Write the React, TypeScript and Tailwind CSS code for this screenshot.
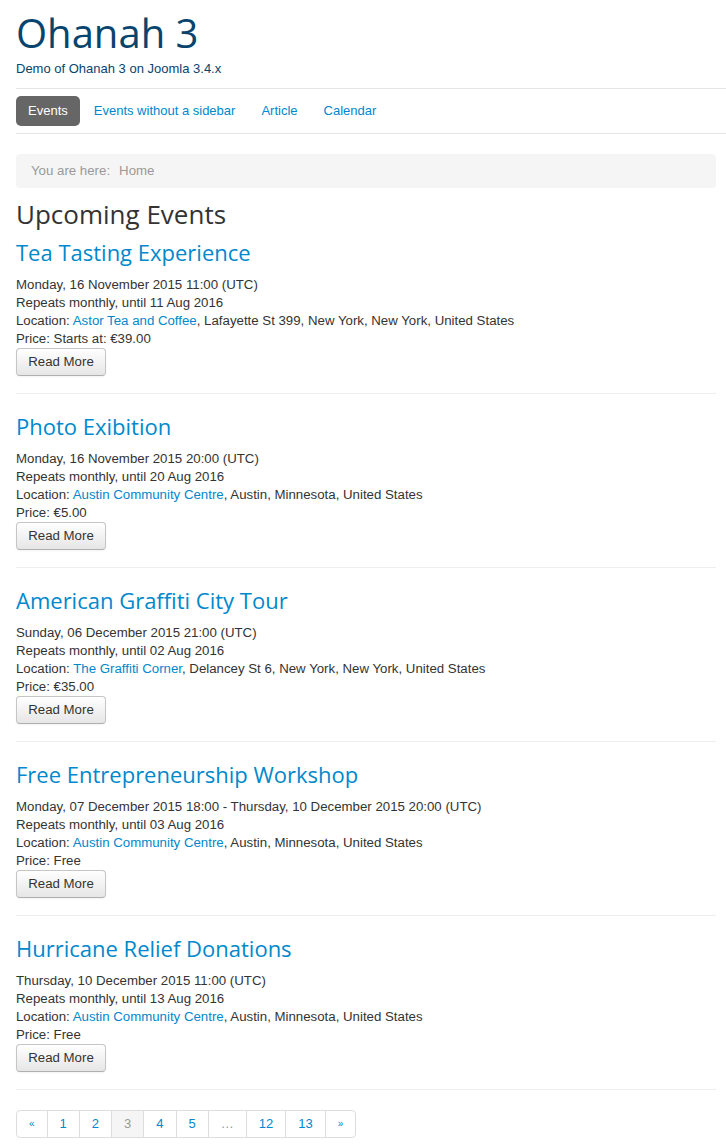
import React from "react";

type Ev = {
  title: string;
  date: string;
  repeat: string;
  loc: string;
  rest: string;
  price: string;
};

const events: Ev[] = [
  {
    title: "Tea Tasting Experience",
    date: "Monday, 16 November 2015 11:00 (UTC)",
    repeat: "Repeats monthly, until 11 Aug 2016",
    loc: "Astor Tea and Coffee",
    rest: ", Lafayette St 399, New York, New York, United States",
    price: "Price: Starts at: €39.00",
  },
  {
    title: "Photo Exibition",
    date: "Monday, 16 November 2015 20:00 (UTC)",
    repeat: "Repeats monthly, until 20 Aug 2016",
    loc: "Austin Community Centre",
    rest: ", Austin, Minnesota, United States",
    price: "Price: €5.00",
  },
  {
    title: "American Graffiti City Tour",
    date: "Sunday, 06 December 2015 21:00 (UTC)",
    repeat: "Repeats monthly, until 02 Aug 2016",
    loc: "The Graffiti Corner",
    rest: ", Delancey St 6, New York, New York, United States",
    price: "Price: €35.00",
  },
  {
    title: "Free Entrepreneurship Workshop",
    date: "Monday, 07 December 2015 18:00 - Thursday, 10 December 2015 20:00 (UTC)",
    repeat: "Repeats monthly, until 03 Aug 2016",
    loc: "Austin Community Centre",
    rest: ", Austin, Minnesota, United States",
    price: "Price: Free",
  },
  {
    title: "Hurricane Relief Donations",
    date: "Thursday, 10 December 2015 11:00 (UTC)",
    repeat: "Repeats monthly, until 13 Aug 2016",
    loc: "Austin Community Centre",
    rest: ", Austin, Minnesota, United States",
    price: "Price: Free",
  },
];

const pages = [
  { t: "«", small: true },
  { t: "1" },
  { t: "2" },
  { t: "3", active: true },
  { t: "4" },
  { t: "5" },
  { t: "…", muted: true },
  { t: "12" },
  { t: "13" },
  { t: "»", small: true },
];

export default function App() {
  return (
    <div
      className="min-h-[1146px] bg-white text-[13.25px] leading-[18px] text-[#333]"
      style={{ fontFamily: '"Liberation Sans", Arial, sans-serif' }}
    >
      <div className="pl-[16px]">
        <div className="pt-[11px]">
          <div
            className="text-[40px] leading-[44px] text-[#08446e]"
            style={{ fontFamily: '"Open Sans", sans-serif' }}
          >
            Ohanah 3
          </div>
          <div className="mt-[5px] text-[13px] text-[#08446e]">Demo of Ohanah 3 on Joomla 3.4.x</div>
        </div>
        <div className="mt-[10px] h-px bg-[#e5e5e5]" />
        <nav className="mt-[7px] flex text-[13px]">
          <a className="rounded-[5px] bg-[#666] px-[12px] py-[6px] text-white">Events</a>
          <a className="ml-[2px] px-[12px] py-[6px] text-[#0088cc]">Events without a sidebar</a>
          <a className="ml-[2px] px-[12px] py-[6px] text-[#0088cc]">Article</a>
          <a className="ml-[2px] px-[12px] py-[6px] text-[#0088cc]">Calendar</a>
        </nav>
        <div className="mt-[7px] h-px bg-[#e5e5e5]" />
      </div>

      <div className="pl-[16px] pr-[10px]">
        <div className="mt-[20px] flex rounded-[4px] bg-[#f5f5f5] px-[15px] py-[8px] text-[#999]">
          <span>You are here:</span>
          <span className="ml-[9px]">Home</span>
        </div>

        <h2
          className="mt-[11px] text-[26px] leading-[30px] text-[#333]"
          style={{ fontFamily: '"Open Sans", sans-serif' }}
        >
          Upcoming Events
        </h2>

        <div className="mt-[10px]">
          {events.map((e, i) => (
            <div key={i}>
              {i > 0 && <div className="mb-[19px] mt-[17px] h-px bg-[#eee]" />}
              <div
                className="text-[22px] leading-[26px] text-[#0088cc]"
                style={{ fontFamily: '"Open Sans", sans-serif' }}
              >
                {e.title}
              </div>
              <div className="mt-[11px]">
                <div>{e.date}</div>
                <div>{e.repeat}</div>
                <div>
                  Location: <a className="text-[#0088cc]">{e.loc}</a>
                  {e.rest}
                </div>
                <div>{e.price}</div>
              </div>
              <button className="flex h-[28px] w-[90px] items-center justify-center rounded-[4px] border border-[#c5c5c5] border-b-[#b0b0b0] bg-gradient-to-b from-white to-[#e6e6e6] text-[13.25px] text-[#333] shadow-[inset_0_1px_0_rgba(255,255,255,0.2),0_1px_2px_rgba(0,0,0,0.05)]">
                Read More
              </button>
            </div>
          ))}
          <div className="mt-[17px] h-px bg-[#eee]" />
        </div>

        <div className="mt-[20px] inline-flex overflow-hidden rounded-[4px] border border-[#ddd]">
          {pages.map((p, i) => (
            <span
              key={i}
              className={
                "flex h-[26px] items-center px-[12px] " +
                (i > 0 ? "border-l border-[#ddd] " : "") +
                (p.active ? "bg-[#f5f5f5] text-[#999] " : p.muted ? "text-[#999] " : "text-[#0088cc] ") +
                (p.small ? "text-[10px]" : "text-[13px]")
              }
            >
              {p.t}
            </span>
          ))}
        </div>
      </div>
    </div>
  );
}
